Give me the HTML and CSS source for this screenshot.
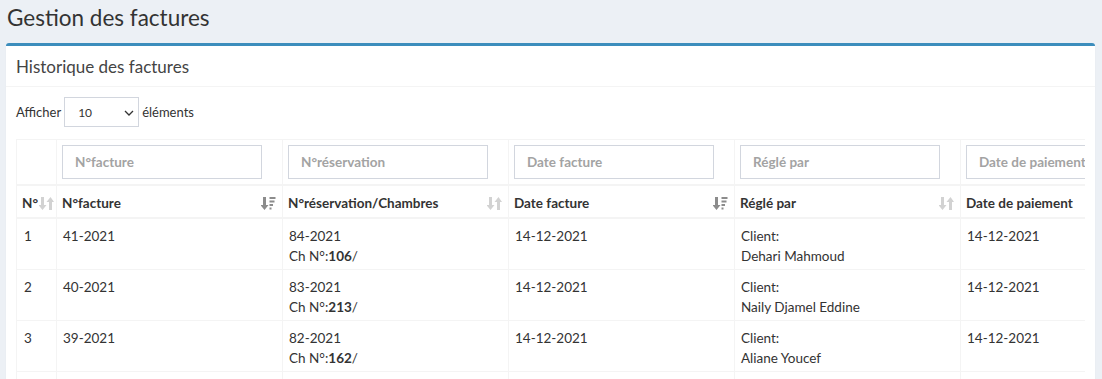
FILE: index.html
```html
<!DOCTYPE html>
<html lang="fr">
<head>
    <meta charset="UTF-8">
    <meta name="viewport" content="width=device-width, initial-scale=1.0">
    <title>Gestion des factures</title>
    <link rel="stylesheet" href="styles.css">
</head>
<body>
    <section class="content-header">
        <h1>Gestion des factures</h1>
    </section>

    <section class="content">
        <div class="box">
            <div class="box-header">
                <h3>Historique des factures</h3>
            </div>
            <div class="box-body">
                <div class="length">
                    <label>Afficher</label>
                    <div class="select-wrap">
                        <select>
                            <option>10</option>
                            <option>25</option>
                            <option>50</option>
                        </select>
                        <svg class="chevron" width="10" height="6" viewBox="0 0 10 6"><path d="M1 1l4 4 4-4" fill="none" stroke="#333" stroke-width="1.3"/></svg>
                    </div>
                    <span>éléments</span>
                </div>

                <div class="table-wrap">
                    <table class="invoices">
                        <colgroup>
                            <col class="c-num">
                            <col class="c-wide">
                            <col class="c-wide">
                            <col class="c-wide">
                            <col class="c-wide">
                            <col class="c-wide">
                            <col class="c-wide">
                        </colgroup>
                        <thead>
                            <tr class="filters">
                                <th></th>
                                <th><input type="text" placeholder="N°facture"></th>
                                <th><input type="text" placeholder="N°réservation"></th>
                                <th><input type="text" placeholder="Date facture"></th>
                                <th><input type="text" placeholder="Réglé par"></th>
                                <th><input type="text" placeholder="Date de paiement"></th>
                                <th><input type="text" placeholder="Montant"></th>
                            </tr>
                            <tr class="heads">
                                <th><span class="first">N°<svg class="sort" width="15" height="15" viewBox="0 0 15 15"><path d="M2 1h3v8h2.5L3.5 14-.5 9H2z M10 14h3V6h2L11.5 1 7.5 6H10z" fill="#d2d2d2"/></svg></span></th>
                                <th><div class="head">N°facture<svg class="sort" width="15" height="15" viewBox="0 0 15 15"><path d="M2 1h3v8h2.5L3.5 14-.5 9H2z" fill="#8c8c8c"/><path d="M8.5 1h6v2h-6z M8.5 4.5h5v2h-5z M8.5 8h3.5v2h-3.5z M8.5 11.5h2v2h-2z" fill="#8c8c8c"/></svg></div></th>
                                <th><div class="head">N°réservation/Chambres<svg class="sort" width="15" height="15" viewBox="0 0 15 15"><path d="M2 1h3v8h2.5L3.5 14-.5 9H2z M10 14h3V6h2L11.5 1 7.5 6H10z" fill="#d2d2d2"/></svg></div></th>
                                <th><div class="head">Date facture<svg class="sort" width="15" height="15" viewBox="0 0 15 15"><path d="M2 1h3v8h2.5L3.5 14-.5 9H2z" fill="#8c8c8c"/><path d="M8.5 1h6v2h-6z M8.5 4.5h5v2h-5z M8.5 8h3.5v2h-3.5z M8.5 11.5h2v2h-2z" fill="#8c8c8c"/></svg></div></th>
                                <th><div class="head">Réglé par<svg class="sort" width="15" height="15" viewBox="0 0 15 15"><path d="M2 1h3v8h2.5L3.5 14-.5 9H2z M10 14h3V6h2L11.5 1 7.5 6H10z" fill="#d2d2d2"/></svg></div></th>
                                <th><div class="head">Date de paiement<svg class="sort" width="15" height="15" viewBox="0 0 15 15"><path d="M2 1h3v8h2.5L3.5 14-.5 9H2z M10 14h3V6h2L11.5 1 7.5 6H10z" fill="#d2d2d2"/></svg></div></th>
                                <th><div class="head">Montant<svg class="sort" width="15" height="15" viewBox="0 0 15 15"><path d="M2 1h3v8h2.5L3.5 14-.5 9H2z M10 14h3V6h2L11.5 1 7.5 6H10z" fill="#d2d2d2"/></svg></div></th>
                            </tr>
                        </thead>
                        <tbody>
                            <tr>
                                <td>1</td>
                                <td>41-2021</td>
                                <td>84-2021<br>Ch N°:<b>106</b>/</td>
                                <td>14-12-2021</td>
                                <td>Client:<br>Dehari Mahmoud</td>
                                <td>14-12-2021</td>
                                <td>12000.00 DA</td>
                            </tr>
                            <tr>
                                <td>2</td>
                                <td>40-2021</td>
                                <td>83-2021<br>Ch N°:<b>213</b>/</td>
                                <td>14-12-2021</td>
                                <td>Client:<br>Naily Djamel Eddine</td>
                                <td>14-12-2021</td>
                                <td>8000.00 DA</td>
                            </tr>
                            <tr>
                                <td>3</td>
                                <td>39-2021</td>
                                <td>82-2021<br>Ch N°:<b>162</b>/</td>
                                <td>14-12-2021</td>
                                <td>Client:<br>Aliane Youcef</td>
                                <td>14-12-2021</td>
                                <td>9500.00 DA</td>
                            </tr>
                            <tr>
                                <td>4</td>
                                <td>38-2021</td>
                                <td>81-2021<br>Ch N°:<b>105</b>/</td>
                                <td>13-12-2021</td>
                                <td>Client:<br>Benali Karim</td>
                                <td>13-12-2021</td>
                                <td>7000.00 DA</td>
                            </tr>
                        </tbody>
                    </table>
                </div>
            </div>
        </div>
    </section>
</body>
</html>
```

FILE: styles.css
```css
* {
    margin: 0;
    padding: 0;
    box-sizing: border-box;
}

body {
    background: #ecf0f5;
    font-family: 'Lato', 'Liberation Sans', sans-serif;
    font-size: 13.5px;
    line-height: 20px;
    color: #333;
}

.content-header {
    padding: 3px 7px 0;
    height: 43px;
}

.content-header h1 {
    font-size: 22.5px;
    font-weight: normal;
    line-height: 30px;
    color: #333;
}

.content {
    padding: 0 7px 0 6px;
}

.box {
    background: #fff;
    border-top: 3px solid #3c8dbc;
    border-radius: 3px;
    box-shadow: 0 1px 1px rgba(0, 0, 0, 0.1);
}

.box-header {
    padding: 11px 10px 9px;
    border-bottom: 1px solid #f4f4f4;
}

.box-header h3 {
    font-size: 17px;
    font-weight: normal;
    line-height: 20px;
    color: #444;
}

.box-body {
    padding: 10px;
}

.length {
    display: flex;
    align-items: center;
    gap: 3px;
    font-size: 13px;
    height: 30px;
    margin-bottom: 12px;
}

.select-wrap {
    position: relative;
}

.select-wrap select {
    appearance: none;
    -webkit-appearance: none;
    width: 75px;
    height: 30px;
    border: 1px solid #d2d6de;
    background: #fff;
    font-family: inherit;
    font-size: 12px;
    color: #333;
    padding: 0 13px;
    outline: none;
}

.chevron {
    position: absolute;
    right: 5px;
    top: 13px;
    pointer-events: none;
}

.table-wrap {
    overflow: hidden;
    width: 100%;
}

.invoices {
    table-layout: fixed;
    border-collapse: collapse;
    width: 1396px;
    border: 1px solid #f4f4f4;
}

.c-num {
    width: 40px;
}

.c-wide {
    width: 226px;
}

.invoices th,
.invoices td {
    border: 1px solid #f4f4f4;
    text-align: left;
    vertical-align: top;
}

.invoices thead th {
    border-bottom-width: 2px;
    vertical-align: middle;
}

.filters th {
    padding: 5px 6px 5px 5px;
}

.filters input {
    width: 200px;
    height: 34px;
    border: 1px solid #d2d6de;
    padding: 0 12px;
    font-family: inherit;
    font-size: 13.5px;
    color: #555;
    outline: none;
}

.filters input::placeholder {
    color: #a3a3a3;
    font-weight: bold;
}

.heads th {
    padding: 7px 6px 4px 5px;
    font-weight: bold;
    white-space: nowrap;
}

.head {
    display: flex;
    justify-content: space-between;
    align-items: center;
}

.first {
    display: flex;
    align-items: center;
    gap: 1px;
}

.heads .sort {
    flex-shrink: 0;
}

.invoices td {
    padding: 7px 6px 3px 6px;
}

.invoices td:first-child {
    padding-left: 7px;
}

.invoices td b {
    font-weight: bold;
}
```
